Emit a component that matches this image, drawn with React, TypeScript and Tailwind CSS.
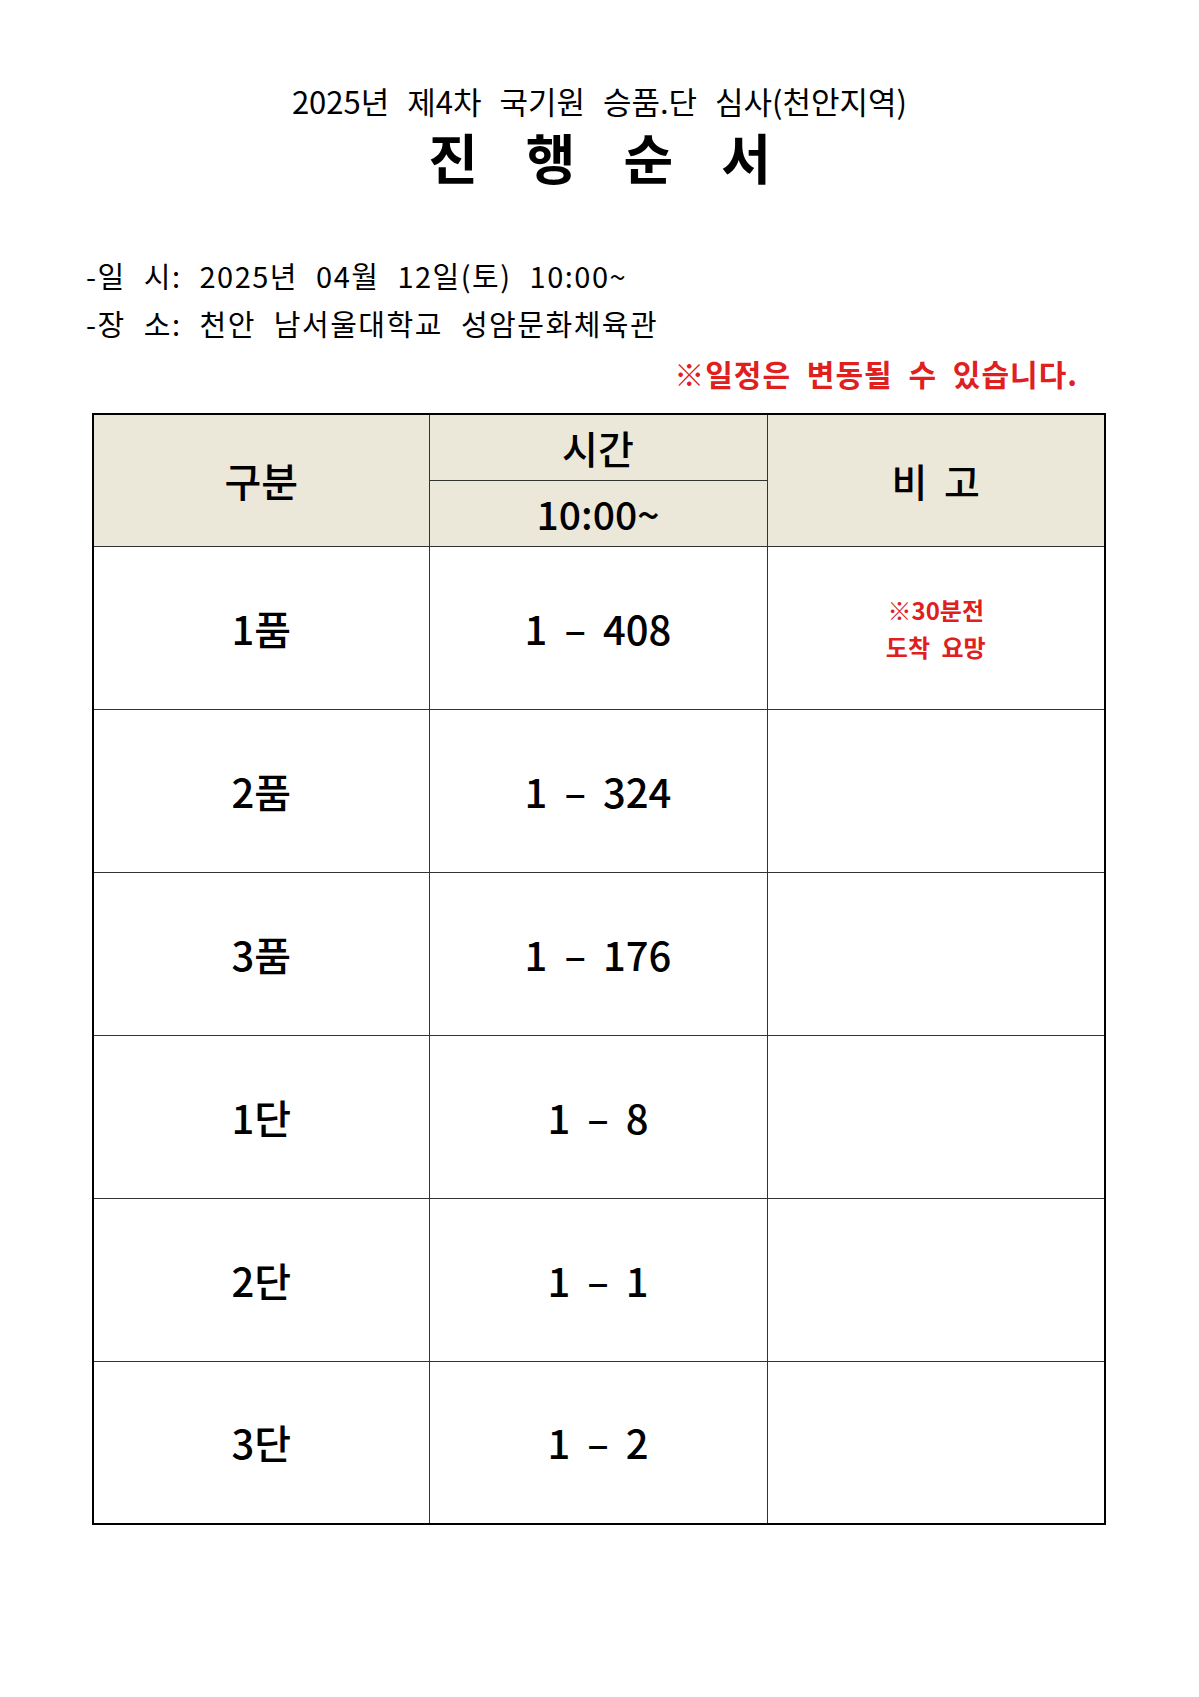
const rows = [
  { grade: "1품", range: "1 – 408", note: true },
  { grade: "2품", range: "1 – 324", note: false },
  { grade: "3품", range: "1 – 176", note: false },
  { grade: "1단", range: "1 – 8", note: false },
  { grade: "2단", range: "1 – 1", note: false },
  { grade: "3단", range: "1 – 2", note: false },
]

const font = "font-['Noto_Sans_CJK_KR','Noto_Sans',sans-serif]"
const cell = "border border-[#333]"

export default function App() {
  return (
    <div className={`min-h-[1697px] w-[1199px] bg-white text-black ${font}`}>
      <div className="pt-[79px] text-center text-[31px] leading-[44px] [word-spacing:11px]">
        2025년 제4차 국기원 승품.단 심사(천안지역)
      </div>
      <div className="mt-[2px] flex justify-center gap-[48px] text-[54px] font-bold leading-[64px]">
        <span>진</span>
        <span>행</span>
        <span>순</span>
        <span>서</span>
      </div>

      <div className="mt-[62px] pl-[86px] text-[29px] leading-[48px] tracking-[1.5px] [word-spacing:10px]">
        <div>-일 시: 2025년 04월 12일(토) 10:00~</div>
        <div>-장 소: 천안 남서울대학교 성암문화체육관</div>
      </div>
      <div className="mt-[3px] w-[1078px] text-right text-[30px] font-semibold leading-[46px] tracking-[1px] text-[#e0201e] [word-spacing:8px]">
        ※일정은 변동될 수 있습니다.
      </div>

      <table className="ml-[92px] mt-[17px] w-[1012px] table-fixed border-collapse border-2 border-black">
        <colgroup>
          <col className="w-[336px]" />
          <col className="w-[338px]" />
          <col className="w-[338px]" />
        </colgroup>
        <thead className="bg-[#ebe8da]">
          <tr className="h-[66px]">
            <th rowSpan={2} className={`${cell} text-[40px] font-medium`}>
              구분
            </th>
            <th className={`${cell} text-[39px] font-medium`}>시간</th>
            <th rowSpan={2} className={`${cell} text-[39px] font-medium [word-spacing:8px]`}>
              비 고
            </th>
          </tr>
          <tr className="h-[66px]">
            <th className={`${cell} text-[39px] font-medium`}>10:00~</th>
          </tr>
        </thead>
        <tbody>
          {rows.map((row) => (
            <tr key={row.grade} className="h-[163px]">
              <td className={`${cell} text-center text-[40px] font-medium`}>{row.grade}</td>
              <td className={`${cell} text-center text-[40px] font-medium [word-spacing:8px]`}>
                {row.range}
              </td>
              <td className={`${cell} text-center`}>
                {row.note && (
                  <div className="text-[24px] font-bold leading-[37px] text-[#e0201e] [word-spacing:6px]">
                    <div>※30분전</div>
                    <div>도착 요망</div>
                  </div>
                )}
              </td>
            </tr>
          ))}
        </tbody>
      </table>
    </div>
  )
}
